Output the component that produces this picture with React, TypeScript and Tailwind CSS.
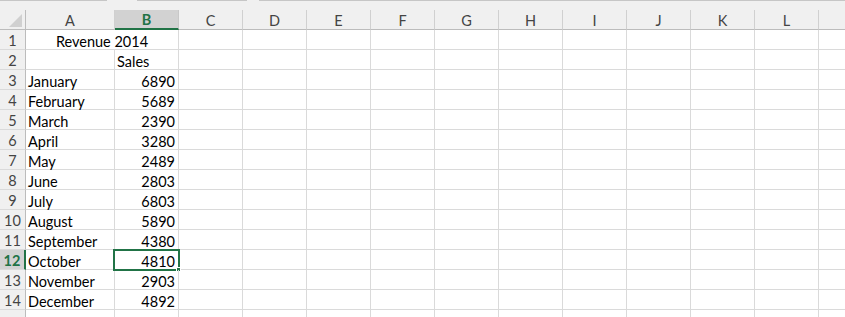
import React from 'react';

const sales = [
  ['January', '6890'],
  ['February', '5689'],
  ['March', '2390'],
  ['April', '3280'],
  ['May', '2489'],
  ['June', '2803'],
  ['July', '6803'],
  ['August', '5890'],
  ['September', '4380'],
  ['October', '4810'],
  ['November', '2903'],
  ['December', '4892'],
];

// M is only partly in view, its letter falls outside the window
const columns = ['A', 'B', 'C', 'D', 'E', 'F', 'G', 'H', 'I', 'J', 'K', 'L', ''];
const emptyCols = ['C', 'D', 'E', 'F', 'G', 'H', 'I', 'J', 'K', 'L', 'M'];

const cell = 'h-[20px] shrink-0 border-r border-b border-[#dadada] pt-[4px] leading-[15px]';
const rowHead = 'w-[26px] h-[20px] shrink-0 flex items-center justify-center pt-[2px] border-r border-b border-r-[#bcbcbc] border-b-[#dadada] text-[#444]';

const RowHeader = ({ n, active }: { n?: number; active?: boolean }) => (
  <div
    className={
      active
        ? 'w-[26px] h-[20px] shrink-0 flex items-center justify-center pt-[2px] border-r-2 border-b border-r-[#217346] border-b-[#dadada] bg-[#d2d2d2] text-[#217346] font-bold'
        : `${rowHead} bg-[#f0f0f0]`
    }
  >
    {n}
  </div>
);

const EmptyCells = () => (
  <>
    {emptyCols.map(c => (
      <div key={c} className={`${cell} w-[64px]`} />
    ))}
  </>
);

const App = () => {
  return (
    <div className="w-[845px] h-[317px] overflow-hidden bg-white font-['Lato',sans-serif] text-[14.5px] text-black">
      {/* formula bar edge */}
      <div className="h-[10px] bg-[#f0f0f0] flex">
        <div className="w-[107px] border-t border-[#c6c6c6]" />
        <div className="w-[30px]" />
        <div className="w-[110px] border-t border-[#c6c6c6]" />
        <div className="w-[12px]" />
        <div className="flex-1 border-t border-[#c6c6c6]" />
      </div>

      {/* column headers */}
      <div className="flex bg-[#f0f0f0] w-max">
        <div className="w-[26px] h-[20px] shrink-0 border-r border-b border-[#bcbcbc] flex items-end justify-end pr-[3px] pb-[2px]">
          <svg width="13" height="13" viewBox="0 0 13 13">
            <polygon points="13,0 13,13 0,13" fill="#d0d0d0" />
          </svg>
        </div>
        {columns.map((c, i) =>
          c === 'B' ? (
            <div
              key={i}
              className="w-[64px] h-[20px] shrink-0 flex items-center justify-center pt-[2px] bg-[#d2d2d2] border-r border-r-[#c8c8c8] border-b-2 border-b-[#217346] text-[#217346] font-bold"
            >
              {c}
            </div>
          ) : (
            <div
              key={i}
              className={`${c === 'A' ? 'w-[89px]' : 'w-[64px]'} h-[20px] shrink-0 flex items-center justify-center pt-[2px] border-r border-b border-r-[#d0d0d0] border-b-[#bcbcbc] text-[#444]`}
            >
              {c}
            </div>
          )
        )}
      </div>

      {/* row 1 */}
      <div className="flex w-max">
        <RowHeader n={1} />
        <div className={`${cell} w-[153px] text-center`}>Revenue 2014</div>
        <EmptyCells />
      </div>

      {/* row 2 */}
      <div className="flex w-max">
        <RowHeader n={2} />
        <div className={`${cell} w-[89px]`} />
        <div className={`${cell} w-[64px] pl-[2px]`}>Sales</div>
        <EmptyCells />
      </div>

      {sales.map(([month, value], i) => {
        const n = i + 3;
        const active = n === 12;
        return (
          <div key={month} className="flex w-max">
            <RowHeader n={n} active={active} />
            <div className={`${cell} w-[89px] pl-[2px]`}>{month}</div>
            <div className={`${cell} w-[64px] pr-[3px] text-right relative`}>
              {value}
              {active && (
                <div className="absolute -left-[2px] -top-[1px] -right-[2px] -bottom-[2px] border-2 border-[#217346]">
                  <div className="absolute -right-[3px] -bottom-[3px] w-[5px] h-[5px] bg-[#217346] border border-white" />
                </div>
              )}
            </div>
            <EmptyCells />
          </div>
        );
      })}

      {/* row 15, only its top edge is in view */}
      <div className="flex w-max">
        <RowHeader />
        <div className={`${cell} w-[89px]`} />
        <div className={`${cell} w-[64px]`} />
        <EmptyCells />
      </div>
    </div>
  );
};

export default App;
